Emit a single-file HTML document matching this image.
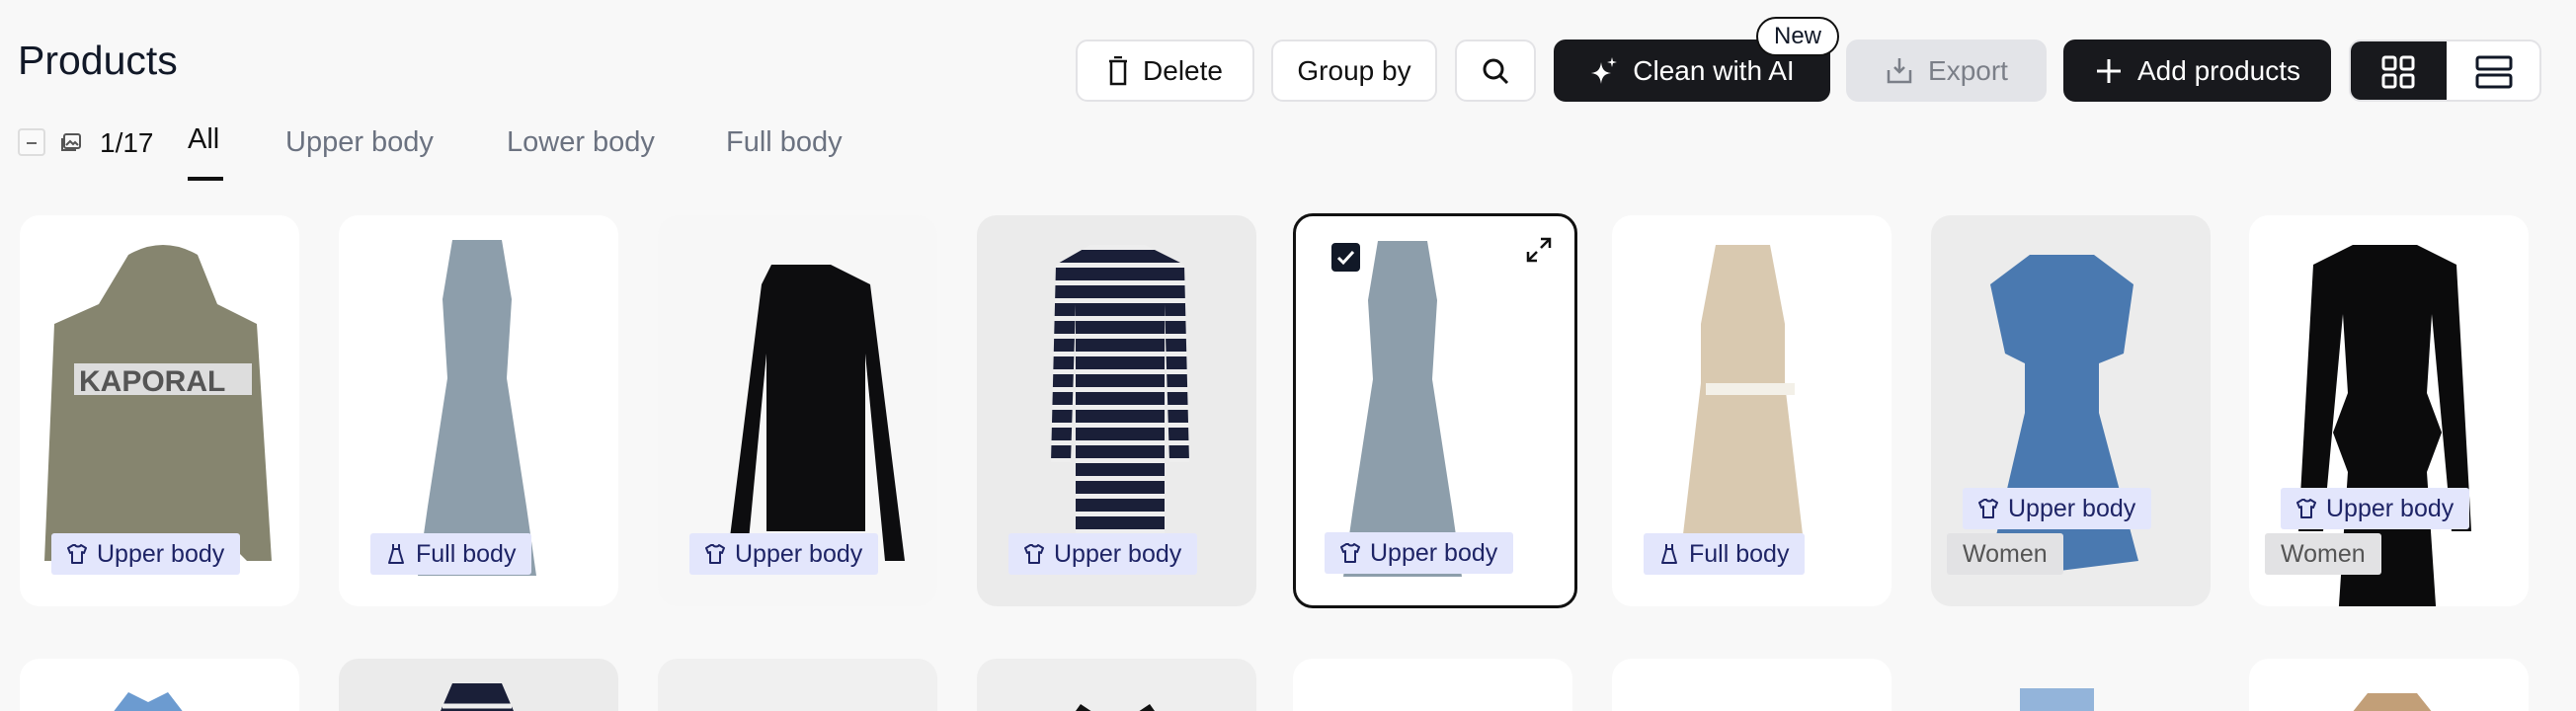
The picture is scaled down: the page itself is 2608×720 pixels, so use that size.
<!DOCTYPE html>
<html style="width:2608px;height:720px;overflow:hidden"><head><meta charset="utf-8"><style>
*{margin:0;padding:0;box-sizing:border-box}
body{width:2608px;height:720px;background:#f8f8f8;font-family:"Liberation Sans",sans-serif;position:relative;overflow:hidden;color:#111827}
.abs{position:absolute}
.btn{position:absolute;top:40px;height:63px;border-radius:12px;border:2px solid #e3e3e6;background:#fff;display:flex;align-items:center;justify-content:center;font-size:28px;color:#111;gap:14px}
.dark{background:#18191d;border-color:#18191d;color:#fff}
.card{position:absolute;width:283px;height:396px;border-radius:20px;background:#fff;overflow:hidden}
.r2{height:53px;border-radius:20px 20px 0 0}
.tag{position:absolute;left:32px;top:322px;height:42px;padding:0 16px 0 14px;background:#e3e6fc;color:#1e2466;font-size:25px;display:flex;align-items:center;gap:8px;border-radius:3px}
.tag.w{background:#e2e2e4;color:#555;padding:0 16px;left:16px}
.tab{position:absolute;top:128px;font-size:29px;color:#6b7280}
</style></head><body>
<svg width="0" height="0" style="position:absolute"><defs>
<symbol id="shirt" viewBox="0 0 24 24"><path d="M8 3L3 6l2 5 2-1v11h10V10l2 1 2-5-5-3c-1 2-5 2-6 0Z" fill="none" stroke="#1e2466" stroke-width="2" stroke-linejoin="round"/></symbol>
<symbol id="dress" viewBox="0 0 24 24"><path d="M9 2v5l-1 4-3 10h14l-3-10-1-4V2M9 7h6" fill="none" stroke="#1e2466" stroke-width="2" stroke-linejoin="round"/></symbol>
</defs></svg>
<div class="abs" style="left:18px;top:38px;font-size:41px;color:#111827">Products</div>
<div class="abs" style="left:18px;top:130px;width:28px;height:28px;border:2px solid #ddd;border-radius:4px;background:#fafafa"><div class="abs" style="left:7px;top:12px;width:10px;height:2px;background:#666"></div></div>
<svg class="abs" style="left:60px;top:133px" width="24" height="24" viewBox="0 0 24 24" fill="none" stroke="#555" stroke-width="2"><rect x="5" y="3" width="16" height="14" rx="2"/><path d="M3 7v12h14"/><path d="M7 14l4-4 3 3 2-2 3 3"/></svg>
<div class="abs" style="left:101px;top:129px;font-size:28px;color:#111">1/17</div>
<div class="tab" style="left:190px;top:125px;color:#111">All</div>
<div class="abs" style="left:190px;top:179px;width:36px;height:4px;background:#111"></div>
<div class="tab" style="left:289px">Upper body</div>
<div class="tab" style="left:513px">Lower body</div>
<div class="tab" style="left:735px">Full body</div>

<div class="btn" style="left:1089px;width:181px"><svg width="22" height="30" viewBox="0 0 22 30" fill="none" stroke="#111" stroke-width="2.5"><path d="M2 5h18M7 1h8M4 5v23h14V5"/></svg>Delete</div>
<div class="btn" style="left:1287px;width:168px">Group by</div>
<div class="btn" style="left:1473px;width:82px"><svg width="30" height="30" viewBox="0 0 30 30" fill="none" stroke="#111" stroke-width="3"><circle cx="13" cy="13" r="9"/><path d="M20 20l7 7"/></svg></div>
<div class="btn dark" style="left:1573px;width:280px"><svg width="30" height="30" viewBox="0 0 30 30" fill="#fff"><path d="M12 6C13 14 16 16 22 17 16 18 13 20 12 28 11 20 8 18 2 17 8 16 11 14 12 6Z"/><path d="M23 1l1 4 4 1-4 1-1 4-1-4-4-1 4-1Z"/></svg>Clean with AI</div>
<div class="abs" style="left:1778px;top:17px;width:84px;height:40px;border:2px solid #111;border-radius:20px;background:#fff;font-size:24px;display:flex;align-items:center;justify-content:center">New</div>
<div class="btn" style="left:1869px;width:203px;background:#e3e4e8;border-color:#e3e4e8;color:#7b7f88"><svg width="30" height="30" viewBox="0 0 30 30" fill="none" stroke="#7b7f88" stroke-width="2.5"><path d="M15 2v14M10 11l5 5 5-5M4 14v12h22V14"/></svg>Export</div>
<div class="btn dark" style="left:2089px;width:271px"><svg width="30" height="30" viewBox="0 0 30 30" stroke="#fff" stroke-width="3"><path d="M15 3v24M3 15h24"/></svg>Add products</div>
<div class="abs" style="left:2378px;top:40px;width:195px;height:63px;border:2px solid #e3e3e6;border-radius:12px;background:#fff;overflow:hidden">
<div class="abs" style="left:0;top:0;width:97px;height:63px;background:#18191d"></div>
<svg class="abs" style="left:31px;top:14px" width="34" height="34" viewBox="0 0 34 34" fill="none" stroke="#fff" stroke-width="3"><rect x="2" y="2" width="12" height="12" rx="2"/><rect x="20" y="2" width="12" height="12" rx="2"/><rect x="2" y="20" width="12" height="12" rx="2"/><rect x="20" y="20" width="12" height="12" rx="2"/></svg>
<svg class="abs" style="left:126px;top:14px" width="38" height="34" viewBox="0 0 38 34" fill="none" stroke="#111827" stroke-width="3"><rect x="2" y="2" width="34" height="12" rx="2"/><rect x="2" y="20" width="34" height="12" rx="2"/></svg>
</div>

<!-- Row 1 -->
<div class="card" style="left:20px;top:218px"><svg width="283" height="396"><path d="M110 40q35-20 70 0l20 50 40 20 15 240-25 0-10-10H60l-10 10H25L35 110l45-20Z" fill="#86856f"/><rect x="55" y="150" width="180" height="32" fill="#ddd"/><text x="60" y="178" font-size="30" font-family="Liberation Sans" fill="#555" font-weight="bold">KAPORAL</text></svg><div class="tag"><svg width="24" height="24"><use href="#shirt"/></svg>Upper body</div></div>
<div class="card" style="left:343px;top:218px"><svg width="283" height="396"><path d="M115 25h50l10 60-5 80 20 130 10 70H80l10-70 20-130-5-80Z" fill="#8d9eab"/></svg><div class="tag"><svg width="24" height="24"><use href="#dress"/></svg>Full body</div></div>
<div class="card" style="left:666px;top:218px;background:#f7f7f7"><svg width="283" height="396"><path d="M115 50h60l40 20 35 280h-20l-20-210 0 180H110l0-180-20 210H70l35-280Z" fill="#0d0d0f"/></svg><div class="tag"><svg width="24" height="24"><use href="#shirt"/></svg>Upper body</div></div>
<div class="card" style="left:989px;top:218px;background:#ebebeb"><svg width="283" height="396"><defs><pattern id="st" width="10" height="18" patternUnits="userSpaceOnUse"><rect width="10" height="18" fill="#1a1f38"/><rect y="12" width="10" height="5" fill="#eee"/></pattern></defs><path d="M115 30h55l40 20 5 200h-20l-5-160v250H100V90l-5 160H75l5-200Z" fill="url(#st)"/></svg><div class="tag"><svg width="24" height="24"><use href="#shirt"/></svg>Upper body</div></div>
<div class="card" style="left:1309px;top:216px;width:288px;height:400px;border:3px solid #111"><svg width="283" height="396"><path d="M83 25h50l10 60-5 80 20 130 10 70H48l10-70 20-130-5-80Z" fill="#8d9eab"/></svg>
<div class="abs" style="left:36px;top:27px;width:29px;height:29px;background:#111827;border-radius:4px"><svg width="29" height="29"><path d="M7 15l5 5 10-11" stroke="#fff" stroke-width="3" fill="none"/></svg></div>
<svg class="abs" style="left:232px;top:20px" width="28" height="28" fill="none" stroke="#111" stroke-width="2.5"><path d="M16 3h9v9M25 3L16 12M12 25H3v-9M3 25l9-9"/></svg>
<div class="tag" style="left:29px;top:320px"><svg width="24" height="24"><use href="#shirt"/></svg>Upper body</div></div>
<div class="card" style="left:1632px;top:218px"><svg width="283" height="396"><path d="M105 30h55l15 80 0 60 20 170-85 10-40-10 20-170 0-60Z" fill="#d9c9b0"/><rect x="95" y="170" width="90" height="12" fill="#f3f0e8"/></svg><div class="tag"><svg width="24" height="24"><use href="#dress"/></svg>Full body</div></div>
<div class="card" style="left:1955px;top:218px;background:#ececec"><svg width="283" height="396"><path d="M100 40h65l40 30-10 70-25 10v50l40 150-80 10-70-10 35-150v-50l-20-10-15-70Z" fill="#4a79b0"/></svg><div class="tag" style="top:276px"><svg width="24" height="24"><use href="#shirt"/></svg>Upper body</div><div class="tag w">Women</div></div>
<div class="card" style="left:2277px;top:218px"><svg width="283" height="396"><path d="M105 30h65l40 20 15 270h-20l-20-220-5 80 15 40-15 40 10 150H90l10-150-15-40 15-40-5-80-20 220H50l15-270Z" fill="#0b0b0c"/></svg><div class="tag" style="top:276px"><svg width="24" height="24"><use href="#shirt"/></svg>Upper body</div><div class="tag w">Women</div></div>

<!-- Row 2 -->
<div class="card r2" style="left:20px;top:667px"><svg width="283" height="60"><path d="M90 60l20-26 20 10 20-10 20 26Z" fill="#6c9bd0"/></svg></div>
<div class="card r2" style="left:343px;top:667px;background:#ebebeb"><svg width="283" height="60"><path d="M100 60l15-35h50l15 35Z" fill="#1a1f38"/><path d="M105 48h70" stroke="#eee" stroke-width="5"/></svg></div>
<div class="card r2" style="left:666px;top:667px;background:#f0f0f0"></div>
<div class="card r2" style="left:989px;top:667px;background:#eeeeee"><svg width="283" height="60"><path d="M95 60l10-14 15 10h40l15-10 10 14Z" fill="#111"/></svg></div>
<div class="card r2" style="left:1309px;top:667px"></div>
<div class="card r2" style="left:1632px;top:667px"></div>
<div class="card r2" style="left:1955px;top:667px;background:#f8f8f8"><svg width="283" height="60"><rect x="90" y="30" width="75" height="30" fill="#93b4da"/></svg></div>
<div class="card r2" style="left:2277px;top:667px"><svg width="283" height="60"><path d="M100 60l20-25h50l20 25Z" fill="#c29f78"/></svg></div>
</body></html>
